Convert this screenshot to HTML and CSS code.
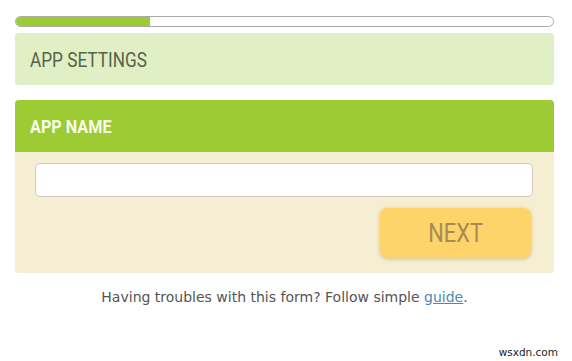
FILE: index.html
```html
<!DOCTYPE html>
<html>
<head>
<meta charset="utf-8">
<link rel="stylesheet" href="styles.css">
</head>
<body>
<div class="page">
  <div class="progress"><div class="progress-fill" style="width:25%"></div></div>
  <div class="step-done"><span class="narrow">APP SETTINGS</span></div>
  <div class="card">
    <div class="card-head"><span class="narrow-head">APP NAME</span></div>
    <div class="card-body">
      <input class="field" type="text">
      <div class="actions"><button class="next"><span class="narrow-btn">NEXT</span></button></div>
    </div>
  </div>
  <p class="help">Having troubles with this form? Follow simple <a href="#">guide</a>.</p>
</div>
<div class="mark">wsxdn.com</div>
</body>
</html>
```
FILE: styles.css
```css
html, body { margin: 0; padding: 0; background: #fff; }
body { width: 572px; height: 361px; position: relative; overflow: hidden; }
.page { padding: 16px 18px 0 15px; }
.progress {
  height: 9px;
  border: 1px solid #a9a9a9;
  border-radius: 6px;
  overflow: hidden;
  background: #fff;
}
.progress-fill { height: 100%; background: #9ccb34; }
.step-done {
  margin-top: 6px;
  height: 52px;
  box-sizing: border-box;
  background: #e1efc5;
  border-radius: 4px;
  padding: 1px 15px 0;
  display: flex;
  align-items: center;
  font-family: Roboto, "Liberation Sans", sans-serif;
  font-size: 20px;
  font-weight: 400;
  color: #56634b;
}
.narrow {
  display: inline-block;
  transform: scaleX(0.86);
  transform-origin: left center;
  white-space: nowrap;
}
.card {
  margin-top: 15px;
  border-radius: 4px;
  overflow: hidden;
  background: #f5eed3;
}
.card-head {
  height: 52px;
  background: #9ccb34;
  padding: 0 15px;
  display: flex;
  align-items: center;
  font-family: Roboto, "Liberation Sans", sans-serif;
  font-weight: bold;
  font-size: 18px;
  color: #f6fbe8;
}
.narrow-head {
  display: inline-block;
  transform: scaleX(0.9);
  transform-origin: left center;
  white-space: nowrap;
}
.card-body { padding: 11px 21px 15px 20px; }
.field {
  display: block;
  width: 100%;
  box-sizing: border-box;
  height: 34px;
  border: 1px solid #cdc8b8;
  border-radius: 5px;
  background: #fff;
  margin: 0;
}
.actions { display: flex; justify-content: flex-end; margin-top: 11px; padding-right: 2px; }
.next {
  width: 151px;
  height: 50px;
  border: none;
  border-radius: 8px;
  background: #fdd36a;
  box-shadow: 0 1px 4px rgba(200,160,60,0.6);
  color: #a88b52;
  font-family: Roboto, "Liberation Sans", sans-serif;
  font-size: 26px;
  padding: 0;
}
.narrow-btn {
  display: inline-block;
  transform: scaleX(0.84);
  white-space: nowrap;
}
.help {
  margin: 16px 0 0;
  text-align: center;
  font-family: "DejaVu Sans", Verdana, sans-serif;
  font-size: 14px;
  color: #555;
}
.help a { color: #4b88b8; }
.mark {
  position: absolute;
  right: 14px;
  bottom: 3px;
  font-family: "DejaVu Sans", sans-serif;
  font-size: 10.5px;
  color: #222;
}
```
